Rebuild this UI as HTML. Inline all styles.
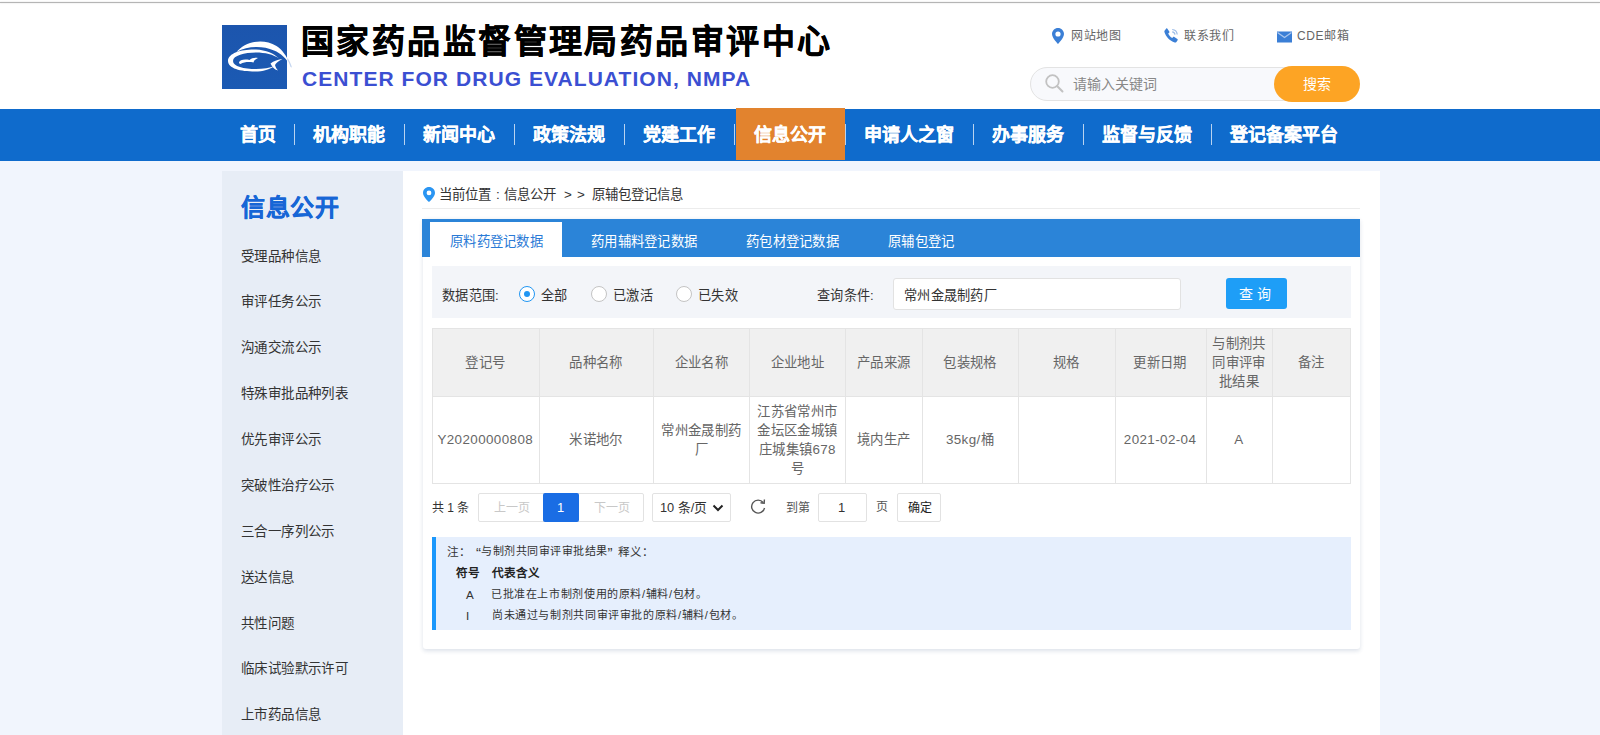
<!DOCTYPE html>
<html lang="zh-CN">
<head>
<meta charset="utf-8">
<style>
*{margin:0;padding:0;box-sizing:border-box;}
html,body{width:1600px;height:735px;overflow:hidden;}
body{background:#f1f5fd;font-family:"Liberation Sans",sans-serif;color:#333;position:relative;}
.a{position:absolute;white-space:nowrap;line-height:1;}
#hdr{position:absolute;left:0;top:0;width:1600px;height:109px;background:#fff;}
#topline{position:absolute;left:0;top:2px;width:1600px;height:1px;background:#b5b5b5;box-shadow:0 0 1.5px #c8c8c8;}
#logo{position:absolute;left:222px;top:25px;width:65px;height:64px;background:#1d55a9;}
#title{left:301px;top:25px;font-size:33px;font-weight:bold;-webkit-text-stroke:0.5px #000;color:#000;letter-spacing:2.43px;}
#entitle{left:302px;top:67.8px;font-size:21px;font-weight:bold;color:#3b4fd2;letter-spacing:1.06px;}
.toplink{font-size:12px;letter-spacing:0.6px;color:#666;top:29.5px;}
#search{position:absolute;left:1030px;top:67px;width:320px;height:34px;border:1px solid #e3e3e3;border-radius:17px;background:#f8f9fc;}
#sbtn{position:absolute;left:1274px;top:66px;width:86px;height:36px;border-radius:18px;background:#fda424;color:#fff;font-size:14px;text-align:center;line-height:36px;}
#nav{position:absolute;left:0;top:109px;width:1600px;height:52px;background:#0f6bcc;}
.nv{position:absolute;margin-top:0.4px;-webkit-text-stroke:0.25px #fff;height:52px;line-height:52px;font-size:18px;font-weight:bold;color:#fff;}
.sep{position:absolute;top:15px;width:1px;height:21px;background:#b8d3f0;}
#active{position:absolute;left:736px;top:108px;width:109px;height:52px;background:#e2832e;}
#side{position:absolute;left:222px;top:171px;width:181px;height:600px;background:#e7edf6;}
#main{position:absolute;left:403px;top:171px;width:977px;height:600px;background:#fff;}
.si{position:absolute;left:241px;margin-top:1.5px;font-size:13.5px;letter-spacing:0.4px;color:#333;}

#card{position:absolute;left:422.5px;top:219px;width:937.5px;height:430px;background:#fff;border-radius:3px;box-shadow:0 1.5px 4px rgba(40,70,120,0.16);}
.ic{position:absolute;}
#tabbar{position:absolute;left:422px;top:219px;width:938px;height:38px;background:#2b84d8;}
#tabact{position:absolute;left:430px;top:222px;width:132px;height:35px;background:#fff;}
.tb{top:234.5px;font-size:13.4px;letter-spacing:0.3px;color:#fff;}
#filter{position:absolute;left:432px;top:266px;width:919px;height:52px;background:#f3f5f9;}
.ft{top:288.5px;font-size:13.2px;letter-spacing:0.25px;color:#333;}
.radio{position:absolute;top:286px;width:16px;height:16px;border-radius:50%;border:1px solid #c4c4c4;background:#fff;}
.radio.on{border-color:#2196f3;}
.radio.on::after{content:"";position:absolute;left:4px;top:4px;width:6px;height:6px;border-radius:50%;background:#2196f3;}
#qinput{position:absolute;left:893px;top:278px;width:288px;height:32px;border:1px solid #e2e2e2;border-radius:3px;background:#fff;}
#qbtn{position:absolute;left:1226px;top:278px;width:61px;height:31px;border-radius:3px;background:#1e9ef7;color:#fff;font-size:14px;text-align:center;line-height:33px;text-indent:-3px;}

.bc{top:188px;font-size:13.4px;color:#333;}
#thead{position:absolute;left:432px;top:328px;width:919px;height:68px;background:#f0f0f0;}
.vl{position:absolute;top:328px;width:1px;height:156px;background:#e4e4e4;}
.hl{position:absolute;left:432px;width:919px;height:1px;background:#e4e4e4;}
.th,.td{position:absolute;display:flex;align-items:center;justify-content:center;text-align:center;font-size:13.4px;letter-spacing:0.4px;color:#666;line-height:19px;}
.th{top:328px;height:68px;}
.td{top:396px;height:87px;}
.pg{font-size:12px;}
.box{position:absolute;border:1px solid #e2e2e2;border-radius:2px;background:#fff;}
#note{position:absolute;left:432px;top:537px;width:919px;height:93px;background:#e6effd;border-left:4px solid #1b98fc;}
.nt{font-size:11.6px;color:#333;}
</style>
</head>
<body>
<div id="hdr"></div>
<div id="topline"></div>
<svg style="position:absolute;left:222px;top:25px" width="75" height="64" viewBox="0 0 75 64">
<defs><linearGradient id="lg" x1="0" y1="0" x2="0" y2="1"><stop offset="0" stop-color="#1c55ad"/><stop offset="1" stop-color="#1b5ab3"/></linearGradient></defs>
<rect x="0" y="0" width="65" height="64" fill="url(#lg)"/>
<path d="M14.5 27 C22 17.5 40 12 54.5 21 C60.5 25 64.5 31 67.5 38 L69 41.5 C64.5 33.5 58.5 28 52 25.5 C40 20.5 26 21 14.5 27Z" fill="#fff"/>
<path d="M65.5 33 C67.5 36 69 39 70 42.5 L68.5 42 C67.5 39 66.5 36.5 65 34Z" fill="#c6d7f0"/>
<path d="M6 36 C6 27.5 21 24 34 24.5 C44 25 52 28.5 57 33.5 C51.5 29.5 43 27.5 34 27.5 C22.5 27.5 11 30.5 11 36 C11 41.5 22 44 34 44 C41 44 48 43 52.5 41 C48 44.5 41 46.5 33 46.5 C18.5 46.5 6 43.5 6 36Z" fill="#fff"/>
<path d="M48.5 38.5 C51.5 36 56.5 34.5 60.5 34 C56.5 36 54 38 53 40 C53.5 42 54.5 44 56 45.5 C52 44.5 50 41.5 48.5 38.5Z" fill="#fff"/>
<path d="M17 37.5 C17.5 35 22 34 27.5 35 C29.5 33.5 32 32.5 36 33 C33.5 34 32 35.5 31.5 37.5 C27 36.5 22 37 18.5 39 C17.5 38.8 17 38.3 17 37.5Z" fill="#fff"/>
</svg>
<div class="a" id="title">国家药品监督管理局药品审评中心</div>
<div class="a" id="entitle">CENTER FOR DRUG EVALUATION, NMPA</div>
<div class="a toplink" style="left:1071px">网站地图</div>
<div class="a toplink" style="left:1184px">联系我们</div>
<div class="a toplink" style="left:1297px">CDE邮箱</div>
<div id="search"></div>
<div class="a" style="left:1073px;top:77px;font-size:14px;color:#888;">请输入关键词</div>

<svg class="ic" style="left:1052px;top:28px" width="12" height="16" viewBox="0 0 12 16"><path d="M6 0C2.7 0 0 2.7 0 6c0 3.9 6 10 6 10s6-6.1 6-10C12 2.7 9.3 0 6 0zm0 8.6A2.6 2.6 0 1 1 6 3.4a2.6 2.6 0 0 1 0 5.2z" fill="#3b7fd6"/></svg>
<svg class="ic" style="left:1164px;top:28px" width="15" height="15" viewBox="0 0 15 15"><path d="M3.2 0.6 L5.3 3.6 C5.6 4 5.5 4.5 5.1 4.8 L4.2 5.5 C4.9 7.3 6.4 9 8.3 10 L9.1 9.1 C9.4 8.8 9.9 8.7 10.3 9 L13.4 11.1 C13.8 11.4 13.9 11.9 13.6 12.3 L12.4 14 C12 14.5 11.3 14.7 10.7 14.5 C5.7 12.7 2 9 0.4 4 C0.2 3.4 0.4 2.7 0.9 2.3 L2.3 0.5 C2.6 0.2 3 0.2 3.2 0.6Z" fill="#3b7fd6"/><path d="M8.2 1.5 A5.5 5.5 0 0 1 13.2 6.5" stroke="#9dbde8" stroke-width="1.2" fill="none"/><path d="M8.2 3.8 A3.2 3.2 0 0 1 11 6.6" stroke="#9dbde8" stroke-width="1.2" fill="none"/></svg>
<svg class="ic" style="left:1277px;top:31px" width="16" height="12" viewBox="0 0 16 12"><rect x="0" y="0.5" width="15" height="11" fill="#3b7fd6"/><path d="M0.5 1.5 L7.5 6.5 L14.5 1.5" stroke="#a9c6ee" stroke-width="1.3" fill="none"/></svg>
<svg class="ic" style="left:1045px;top:74px" width="19" height="19" viewBox="0 0 19 19"><circle cx="7.5" cy="7.5" r="6.3" stroke="#c2c2c2" stroke-width="1.8" fill="none"/><path d="M12.3 12.3 L17.5 17.5" stroke="#c2c2c2" stroke-width="2" stroke-linecap="round"/></svg>
<div id="sbtn">搜索</div>

<div id="nav"></div>
<div id="active"></div>
<div class="nv" style="left:240px;top:109px">首页</div>
<div class="sep" style="left:294px;top:124px"></div>
<div class="nv" style="left:313px;top:109px">机构职能</div>
<div class="sep" style="left:404px;top:124px"></div>
<div class="nv" style="left:423px;top:109px">新闻中心</div>
<div class="sep" style="left:514px;top:124px"></div>
<div class="nv" style="left:533px;top:109px">政策法规</div>
<div class="sep" style="left:624px;top:124px"></div>
<div class="nv" style="left:643px;top:109px">党建工作</div>
<div class="sep" style="left:734px;top:124px"></div>
<div class="nv" style="left:754px;top:108.5px">信息公开</div>
<div class="sep" style="left:845px;top:124px"></div>
<div class="nv" style="left:864px;top:109px">申请人之窗</div>
<div class="sep" style="left:973px;top:124px"></div>
<div class="nv" style="left:992px;top:109px">办事服务</div>
<div class="sep" style="left:1083px;top:124px"></div>
<div class="nv" style="left:1102px;top:109px">监督与反馈</div>
<div class="sep" style="left:1211px;top:124px"></div>
<div class="nv" style="left:1230px;top:109px">登记备案平台</div>

<div id="side"></div>
<div id="main"></div>
<div class="a" style="left:241px;top:196px;font-size:24px;letter-spacing:0.5px;font-weight:bold;color:#1766d6;-webkit-text-stroke:0.3px #1766d6;">信息公开</div>
<div class="a si" style="top:248.00px">受理品种信息</div>
<div class="a si" style="top:293.88px">审评任务公示</div>
<div class="a si" style="top:339.76px">沟通交流公示</div>
<div class="a si" style="top:385.64px">特殊审批品种列表</div>
<div class="a si" style="top:431.52px">优先审评公示</div>
<div class="a si" style="top:477.40px">突破性治疗公示</div>
<div class="a si" style="top:523.28px">三合一序列公示</div>
<div class="a si" style="top:569.16px">送达信息</div>
<div class="a si" style="top:615.04px">共性问题</div>
<div class="a si" style="top:660.92px">临床试验默示许可</div>
<div class="a si" style="top:706.80px">上市药品信息</div>

<div id="card"></div>
<svg class="ic" style="left:423px;top:187px" width="12" height="15" viewBox="0 0 12 15"><path d="M6 0C2.7 0 0 2.6 0 5.9 0 9.6 6 15 6 15s6-5.4 6-9.1C12 2.6 9.3 0 6 0zm0 8.3A2.4 2.4 0 1 1 6 3.5a2.4 2.4 0 0 1 0 4.8z" fill="#2a95f2"/></svg>
<div class="a bc" style="left:439px">当前位置</div><div class="a bc" style="left:496px">:</div><div class="a bc" style="left:504px">信息公开</div><div class="a bc" style="left:564px">&gt;</div><div class="a bc" style="left:577px">&gt;</div><div class="a bc" style="left:592px">原辅包登记信息</div>
<div style="position:absolute;left:422px;top:208px;width:938px;height:1px;background:#ececec;"></div>
<div id="tabbar"></div>
<div id="tabact"></div>
<div class="a tb" style="left:450px;color:#2a7ad6">原料药登记数据</div>
<div class="a tb" style="left:591px">药用辅料登记数据</div>
<div class="a tb" style="left:746px">药包材登记数据</div>
<div class="a tb" style="left:888px">原辅包登记</div>
<div id="filter"></div>
<div class="a ft" style="left:442px">数据范围:</div>
<div class="radio on" style="left:519px"></div>
<div class="a ft" style="left:541px">全部</div>
<div class="radio" style="left:591px"></div>
<div class="a ft" style="left:613px">已激活</div>
<div class="radio" style="left:676px"></div>
<div class="a ft" style="left:698px">已失效</div>
<div class="a ft" style="left:817px">查询条件:</div>
<div id="qinput"></div>
<div class="a ft" style="left:904px">常州金晟制药厂</div>
<div id="qbtn">查 询</div>
<div id="thead"></div>
<div class="vl" style="left:432px"></div><div class="vl" style="left:538.5px"></div><div class="vl" style="left:653.4px"></div><div class="vl" style="left:749.4px"></div><div class="vl" style="left:845.4px"></div><div class="vl" style="left:922px"></div><div class="vl" style="left:1018px"></div><div class="vl" style="left:1114.6px"></div><div class="vl" style="left:1205.5px"></div><div class="vl" style="left:1272.4px"></div><div class="vl" style="left:1350.4px"></div><div class="hl" style="top:328px"></div><div class="hl" style="top:395.5px"></div><div class="hl" style="top:483px"></div>
<div class="th" style="left:432px;width:106.5px">登记号</div><div class="td" style="left:432px;width:106.5px">Y20200000808</div>
<div class="th" style="left:538.5px;width:114.89999999999998px">品种名称</div><div class="td" style="left:538.5px;width:114.89999999999998px">米诺地尔</div>
<div class="th" style="left:653.4px;width:96.0px">企业名称</div><div class="td" style="left:653.4px;width:96.0px">常州金晟制药<br>厂</div>
<div class="th" style="left:749.4px;width:96.0px">企业地址</div><div class="td" style="left:749.4px;width:96.0px">江苏省常州市<br>金坛区金城镇<br>庄城集镇678<br>号</div>
<div class="th" style="left:845.4px;width:76.60000000000002px">产品来源</div><div class="td" style="left:845.4px;width:76.60000000000002px">境内生产</div>
<div class="th" style="left:922px;width:96px">包装规格</div><div class="td" style="left:922px;width:96px">35kg/桶</div>
<div class="th" style="left:1018px;width:96.59999999999991px">规格</div><div class="td" style="left:1018px;width:96.59999999999991px"></div>
<div class="th" style="left:1114.6px;width:90.90000000000009px">更新日期</div><div class="td" style="left:1114.6px;width:90.90000000000009px">2021-02-04</div>
<div class="th" style="left:1205.5px;width:66.90000000000009px">与制剂共<br>同审评审<br>批结果</div><div class="td" style="left:1205.5px;width:66.90000000000009px">A</div>
<div class="th" style="left:1272.4px;width:78.0px">备注</div><div class="td" style="left:1272.4px;width:78.0px"></div>

<div class="a pg" style="left:432px;top:502px;color:#333">共 1 条</div>
<div class="box" style="left:478px;top:493px;width:166px;height:29px;"></div>
<div class="a pg" style="left:494px;top:502px;color:#c8c8c8">上一页</div>
<div style="position:absolute;left:543px;top:493px;width:36px;height:29px;background:#1a6de4;border-radius:2px;"></div>
<div class="a pg" style="left:557px;top:501px;color:#fff;font-size:13px">1</div>
<div class="a pg" style="left:594px;top:502px;color:#c8c8c8">下一页</div>
<div class="box" style="left:652px;top:493px;width:79px;height:29px;"></div>
<div class="a pg" style="left:660px;top:501.5px;color:#333;font-size:12.8px">10 条/页</div>
<svg class="ic" style="left:712px;top:504px" width="12" height="8" viewBox="0 0 12 8"><path d="M1.5 1.5L6 6l4.5-4.5" stroke="#222" stroke-width="2" fill="none"/></svg>
<svg class="ic" style="left:750px;top:499px" width="17" height="16" viewBox="0 0 17 16"><path d="M13.2 3.5A6.5 6.5 0 1 0 14.5 9" stroke="#555" stroke-width="1.4" fill="none"/><path d="M10.5 3.8L14.2 4.2 14.4 0.5" stroke="#555" stroke-width="1.4" fill="none"/></svg>
<div class="a pg" style="left:786px;top:501.5px;color:#555">到第</div>
<div class="box" style="left:818px;top:493px;width:49px;height:29px;"></div>
<div class="a pg" style="left:838px;top:501px;color:#333;font-size:13px">1</div>
<div class="a pg" style="left:876px;top:501px;color:#555">页</div>
<div class="box" style="left:897px;top:493px;width:44px;height:29px;"></div>
<div class="a pg" style="left:908px;top:502px;color:#222">确定</div>
<div id="note"></div>
<div class="a nt" style="left:447px;top:546px">注：</div><div class="a nt" style="left:476px;top:545px;font-size:15px">“</div><div class="a nt" style="left:481px;top:546px;font-size:11px;letter-spacing:0.55px">与制剂共同审评审批结果</div><div class="a nt" style="left:607.5px;top:545px;font-size:15px">”</div><div class="a nt" style="left:618px;top:546px">释义：</div>
<div class="a nt" style="left:456px;top:567px;font-weight:bold;color:#222">符号</div>
<div class="a nt" style="left:492px;top:567px;font-weight:bold;color:#222">代表含义</div>
<div class="a nt" style="left:466px;top:589px">A</div>
<div class="a nt" style="left:491px;top:589px;font-size:11px;letter-spacing:0.62px">已批准在上市制剂使用的原料/辅料/包材。</div>
<div class="a nt" style="left:466px;top:610px">I</div>
<div class="a nt" style="left:492px;top:610px;font-size:11px;letter-spacing:0.62px">尚未通过与制剂共同审评审批的原料/辅料/包材。</div>
</body>
</html>
